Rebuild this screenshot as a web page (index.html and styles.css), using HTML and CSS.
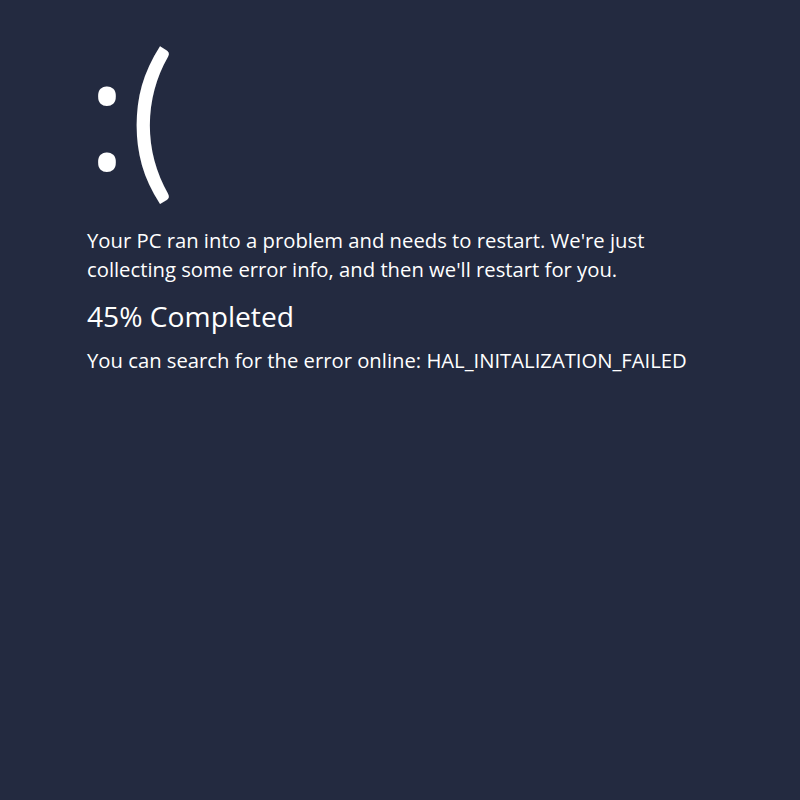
FILE: index.html
```html
<!DOCTYPE html>
<html>
<head>
<meta charset="utf-8">
<link rel="stylesheet" href="styles.css">
</head>
<body>
<main class="screen">
  <div class="face"><span class="eyes">:</span><span class="mouth">(</span></div>
  <p class="message">Your PC ran into a problem and needs to restart. We're just<br>collecting some error info, and then we'll restart for you.</p>
  <p class="progress">45% Completed</p>
  <p class="code">You can search for the error online: HAL_INITALIZATION_FAILED</p>
</main>
</body>
</html>
```
FILE: styles.css
```css
html, body {
  margin: 0;
  padding: 0;
  background: #232a40;
  height: 100%;
}
.screen {
  padding: 12px 0 0 87px;
  color: #ffffff;
  font-family: "Open Sans", "Noto Sans", sans-serif;
}
.face {
  font-size: 170px;
  line-height: 200px;
  height: 214px;
}
.eyes {
  font-size: 152px;
  font-weight: 500;
  margin-right: 2px;
  vertical-align: 9px;
}
.mouth {
  font-family: "Lato", sans-serif;
  font-weight: 400;
}
.message {
  margin: 0;
  font-size: 20.25px;
  line-height: 29px;
}
.progress {
  margin: 14px 0 0;
  font-size: 28.2px;
  line-height: 36px;
}
.code {
  margin: 12px 0 0;
  font-size: 20.25px;
  line-height: 29px;
}
```
